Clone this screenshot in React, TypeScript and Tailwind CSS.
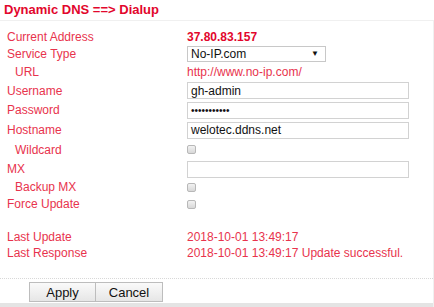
const rows: { label: string; indent?: boolean; h: string; kind: string; value?: string }[] = [
  { label: "Current Address", h: "h-[16px]", kind: "strong", value: "37.80.83.157" },
  { label: "Service Type", h: "h-[17px]", kind: "select", value: "No-IP.com" },
  { label: "URL", indent: true, h: "h-[19px]", kind: "link", value: "http://www.no-ip.com/" },
  { label: "Username", h: "h-[19px]", kind: "input", value: "gh-admin" },
  { label: "Password", h: "h-[20px]", kind: "password", value: "•••••••••••" },
  { label: "Hostname", h: "h-[20px]", kind: "input", value: "welotec.ddns.net" },
  { label: "Wildcard", indent: true, h: "h-[19px]", kind: "check" },
  { label: "MX", h: "h-[20px]", kind: "input", value: "" },
  { label: "Backup MX", indent: true, h: "h-[16px]", kind: "check" },
  { label: "Force Update", h: "h-[18px]", kind: "check" },
];

const Check = () => (
  <span className="block w-[9px] h-[9px] rounded-[2px] border border-[#b8b8b8] bg-gradient-to-b from-[#f2f2f2] to-[#d8d8d8]" />
);

const Field = ({ kind, value }: { kind: string; value?: string }) => {
  if (kind === "strong") return <span className="font-bold text-[#e2062c]">{value}</span>;
  if (kind === "link") return <span className="text-[#e8334d]">{value}</span>;
  if (kind === "check") return <Check />;
  if (kind === "select")
    return (
      <div className="w-[139px] h-[16px] border border-[#c8c8c8] bg-white flex items-center justify-between pl-[3px] pr-[6px] text-[#111]">
        <span>{value}</span>
        <span className="text-[8px]">▼</span>
      </div>
    );
  return (
    <div
      className={`w-[222px] h-[17px] border border-[#d2d2d2] bg-white flex items-center pl-[3px] text-[#111] ${
        kind === "password" ? "text-[10px]" : ""
      }`}
    >
      {value}
    </div>
  );
};

export default function App() {
  return (
    <div className="w-[434px] h-[307px] bg-white flex flex-col font-['Liberation_Sans',Arial,sans-serif] text-[12px] overflow-hidden">
      <div className="h-[20px] px-[4px] pt-[2px] font-bold text-[13px] text-[#e2062c] leading-[16px]">
        Dynamic DNS ==&gt; Dialup
      </div>
      <div className="flex-1 flex flex-col border-t border-r border-[#f0f0f0] pt-[8px]">
        {rows.map((r) => (
          <div key={r.label} className={`flex items-center ${r.h}`}>
            <div className={`w-[187px] text-[#e8334d] ${r.indent ? "pl-[15px]" : "pl-[7px]"}`}>{r.label}</div>
            <Field kind={r.kind} value={r.value} />
          </div>
        ))}
        <div className="h-[16px]" />
        <div className="flex items-center h-[16px] text-[#e8334d]">
          <div className="w-[187px] pl-[7px]">Last Update</div>
          <span>2018-10-01 13:49:17</span>
        </div>
        <div className="flex items-center h-[16px] text-[#e8334d]">
          <div className="w-[187px] pl-[7px]">Last Response</div>
          <span>2018-10-01 13:49:17 Update successful.</span>
        </div>
        <div className="flex-1" />
        <div className="border-t border-dotted border-[#d8d8d8] pt-[3px] pl-[29px] flex">
          <button className="w-[67px] h-[20px] border border-[#bdbdbd] bg-gradient-to-b from-[#fafafa] to-[#e6e6e6] text-[13px] text-[#111]">
            Apply
          </button>
          <button className="w-[67px] h-[20px] border border-l-0 border-[#bdbdbd] bg-gradient-to-b from-[#fafafa] to-[#e6e6e6] text-[13px] text-[#111]">
            Cancel
          </button>
        </div>
        <div className="h-[4px] mt-[1px] bg-[#e4e4e4]" />
      </div>
    </div>
  );
}
